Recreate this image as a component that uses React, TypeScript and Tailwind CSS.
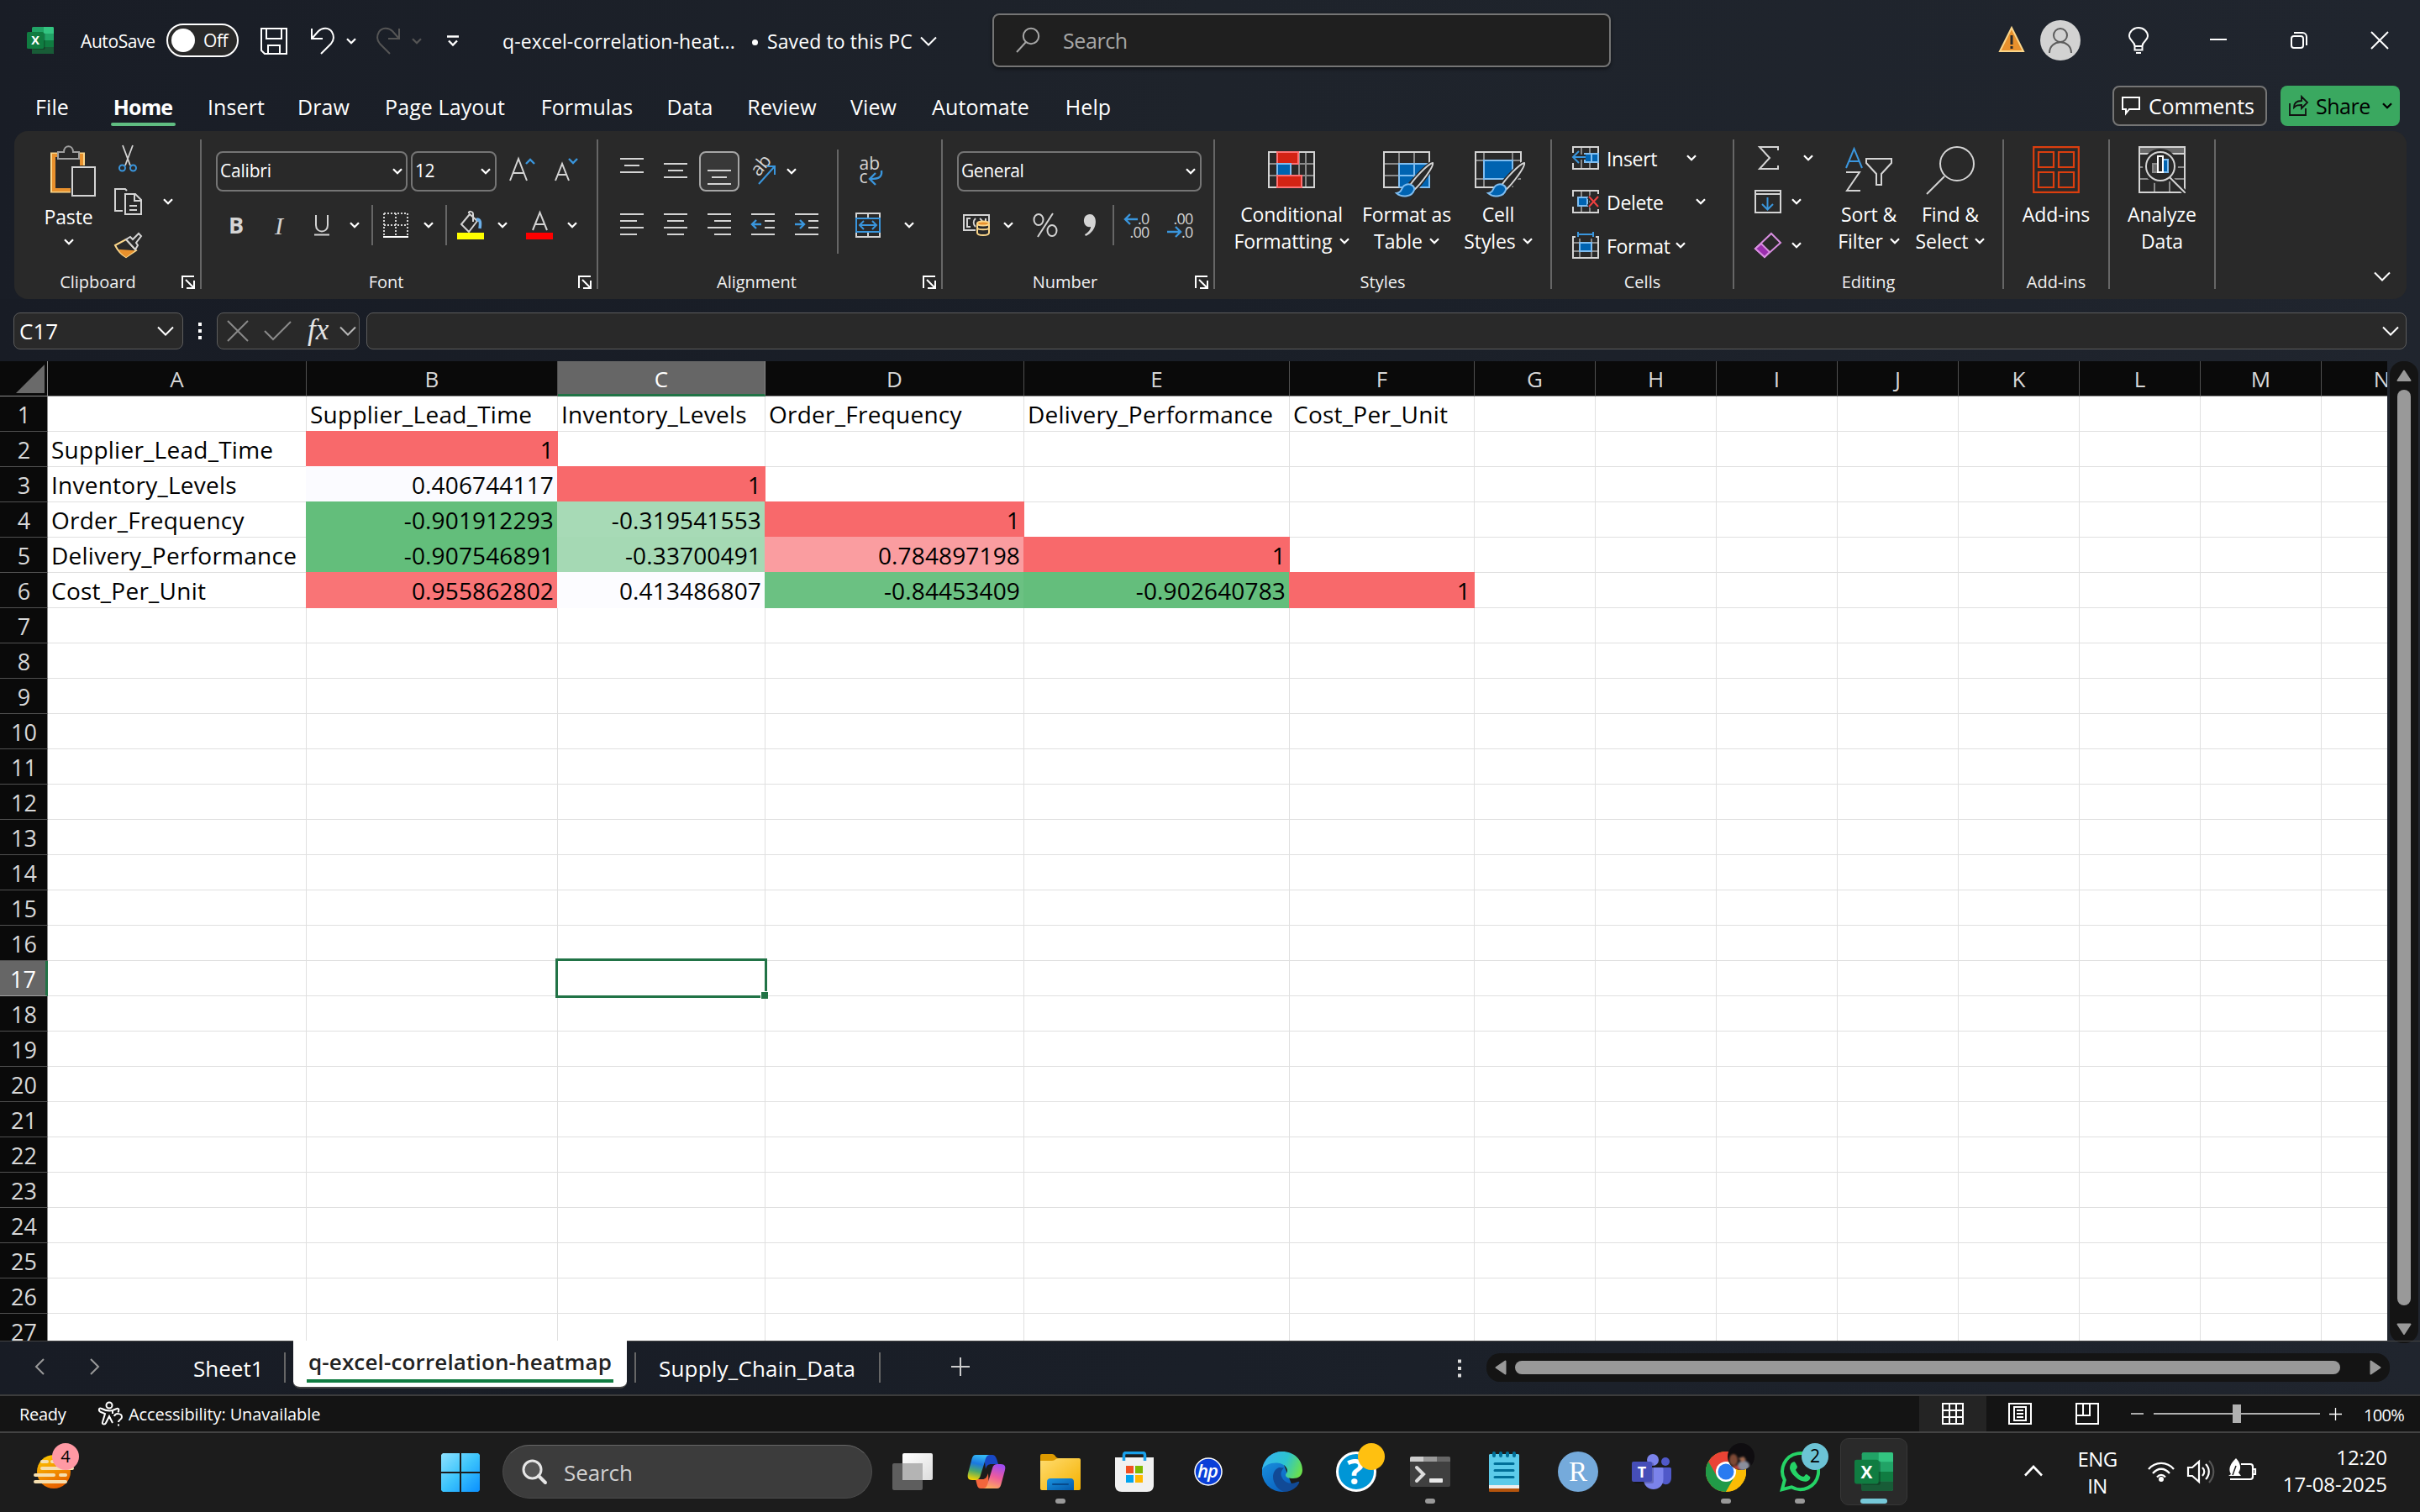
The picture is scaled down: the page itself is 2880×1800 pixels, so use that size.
import type { ReactNode } from 'react';

type IconProps = { w: number; h: number; children: ReactNode; className?: string };

function Icon({ w, h, children, className = '' }: IconProps) {
  return (
    <svg
      width={w}
      height={h}
      viewBox={`0 0 ${w} ${h}`}
      fill="none"
      stroke="#d4d4d4"
      strokeWidth="2"
      className={`block shrink-0 overflow-visible ${className}`}
    >
      {children}
    </svg>
  );
}

function Chevron({ className = 'text-white' }: { className?: string }) {
  return (
    <Icon w={12} h={8} className={className}>
      <path d="M1 1.2l5 5 5-5" stroke="currentColor" strokeWidth="2.3" />
    </Icon>
  );
}

function BigChevron({ className = 'text-white' }: { className?: string }) {
  return (
    <Icon w={20} h={12} className={className}>
      <path d="M1 1.5l9 9 9-9" stroke="currentColor" strokeWidth="2" />
    </Icon>
  );
}

function Slot({ className, children }: { className: string; children: ReactNode }) {
  return <div className={`flex shrink-0 items-center justify-center ${className}`}>{children}</div>;
}

function Sep({ className }: { className: string }) {
  return <div className={`w-[2px] shrink-0 bg-[#666] ${className}`} />;
}

function ExcelLogo({ size }: { size: number }) {
  return (
    <svg width={size} height={size} viewBox="0 0 32 32" className="block shrink-0">
      <rect x="6" y="0" width="26" height="32" rx="1.5" fill="#21a366" />
      <path d="M20 0h10.500a1.500 1.500 0 0 1 1.500 1.500V8H20z" fill="#33c481" />
      <rect x="20" y="8" width="12" height="8" fill="#21a366" />
      <rect x="6" y="16" width="14" height="16" fill="#185c37" />
      <rect x="20" y="16" width="12" height="8" fill="#107c41" />
      <path d="M6 24h26v6.500a1.500 1.500 0 0 1-1.500 1.500h-23A1.500 1.500 0 0 1 6 30.500z" fill="#185c37" />
      <rect x="6" y="7" width="15.500" height="20" rx="1.500" fill="#000" opacity=".25" />
      <rect x="0" y="6" width="20" height="20" rx="1.600" fill="#107c41" />
      <text x="10" y="21.300" textAnchor="middle" fontFamily="Open Sans, sans-serif" fontSize="14.500" fontWeight="700" fill="#fff">X</text>
    </svg>
  );
}

/* ---------- title bar ---------- */

function TitleBar() {
  return (
    <div className="flex h-[104px] items-center text-[21px] tracking-[-0.4px] text-white">
      <div className="ml-[32px] -mt-[8px]"><ExcelLogo size={32} /></div>
      <span className="-mt-[5px] ml-[32px] w-[90px] whitespace-nowrap">AutoSave</span>
      <div className="-mt-[8px] ml-[12px] flex h-[40px] w-[86px] items-center rounded-full border-2 border-white bg-[#292929] pl-[4px]">
        <div className="size-[28px] rounded-full bg-white" />
        <span className="ml-[10px] mt-[2px]">Off</span>
      </div>
      <Icon w={32} h={32} className="-mt-[7px] ml-[26px]">
        <path d="M1 1h30v30H5l-4-4zM7 1v12h18V1M9 31V21h14v10" stroke="#fff" />
      </Icon>
      <Icon w={28} h={32} className="-mt-[7px] ml-[28px]">
        <path d="M1 1v12h13M1 13L9 4C14-1 22 0 25 5s3 9-1 14L12 31" stroke="#fff" />
      </Icon>
      <div className="-mt-[7px] ml-[14px]"><Chevron /></div>
      <Icon w={28} h={32} className="-mt-[7px] ml-[24px]">
        <path d="M27 1v12H14M27 13L19 4C14-1 6 0 3 5s-3 9 1 14l12 12" stroke="#555" />
      </Icon>
      <div className="-mt-[7px] ml-[14px]"><Chevron className="text-[#555]" /></div>
      <Icon w={14} h={14} className="-mt-[7px] ml-[30px]">
        <path d="M0 1.500h14M2 6.500l5 5 5-5" stroke="#fff" strokeWidth="2.300" />
      </Icon>
      <span className="-mt-[5px] ml-[52px] w-[276px] whitespace-nowrap text-[23px] tracking-[0.1px]">q-excel-correlation-heat...</span>
      <span className="-mt-[3px] ml-[21px] size-[7px] rounded-full bg-white" />
      <span className="-mt-[5px] ml-[11px] w-[173px] whitespace-nowrap text-[23px] tracking-[0.1px]">Saved to this PC</span>
      <div className="-mt-[7px] ml-[9px]"><BigChevron /></div>
      <div className="-mt-[8px] ml-[66px] flex h-[64px] w-[736px] items-center rounded-[8px] border-2 border-[#757575] bg-[#1f1f1f] shadow-[0_2px_4px_rgba(0,0,0,.5)]">
        <Icon w={28} h={30} className="ml-[26px]">
          <circle cx="18" cy="10" r="9.200" stroke="#a6a6a6" />
          <path d="M12 17L1 29" stroke="#a6a6a6" />
        </Icon>
        <span className="ml-[28px] mt-[2px] text-[25px] text-[#a6a6a6]">Search</span>
      </div>
      <div className="ml-auto flex items-center pr-[38px]">
        <Icon w={30} h={30} className="-mt-[10px]">
          <path d="M15 1L29 29H1z" fill="#e8912d" stroke="#fbd68a" />
          <path d="M15 10v11M15 23v3" stroke="#292929" strokeWidth="3" />
        </Icon>
        <div className="-mt-[8px] ml-[19px] flex size-[48px] items-center justify-center rounded-full bg-[#d2d2d2]">
          <Icon w={28} h={30}>
            <circle cx="14" cy="9" r="8" stroke="#5c5c5c" />
            <path d="M1 30c0-17 26-17 26 0" stroke="#5c5c5c" />
          </Icon>
        </div>
        <Icon w={24} h={32} className="-mt-[8px] ml-[57px]">
          <path d="M7.500 23c0-6-6.500-6.500-6.500-12a11 10 0 0 1 22 0c0 5.500-6.500 6-6.500 12zM7.500 23v4.500h9V23M9 31h6" stroke="#fff" />
        </Icon>
        <Icon w={20} h={2} className="-mt-[10px] ml-[73px]"><path d="M0 1h20" stroke="#fff" /></Icon>
        <Icon w={20} h={20} className="-mt-[8px] ml-[76px]">
          <rect x="1" y="5" width="14" height="14" rx="3" stroke="#fff" />
          <path d="M4 1h10a5 5 0 0 1 5 5v10" stroke="#fff" />
        </Icon>
        <Icon w={20} h={20} className="-mt-[8px] ml-[76px]"><path d="M0 0l20 20M20 0L0 20" stroke="#fff" /></Icon>
      </div>
    </div>
  );
}

/* ---------- ribbon tabs ---------- */

const ribbonTabs = [
  { label: 'File', cls: 'w-[100px]' },
  { label: 'Home', cls: 'w-[116px]', active: true },
  { label: 'Insert', cls: 'w-[106px]' },
  { label: 'Draw', cls: 'w-[102px]' },
  { label: 'Page Layout', cls: 'w-[187px]' },
  { label: 'Formulas', cls: 'w-[151px]' },
  { label: 'Data', cls: 'w-[94px]' },
  { label: 'Review', cls: 'w-[125px]' },
  { label: 'View', cls: 'w-[93px]' },
  { label: 'Automate', cls: 'w-[162px]' },
  { label: 'Help', cls: 'w-[94px]' },
];

function TabBar() {
  return (
    <div className="flex h-[52px] pl-[12px] text-[25px] tracking-[0.1px] text-white">
      {ribbonTabs.map((t) => (
        <div key={t.label} className={`flex h-[46px] flex-col items-center whitespace-nowrap ${t.cls}`}>
          <span className={`leading-[47px] ${t.active ? 'font-bold tracking-[-0.9px]' : ''}`}>{t.label}</span>
          {t.active && <div className="-mt-[5px] h-[4px] w-[77px] shrink-0 rounded-full bg-[#60bd82]" />}
        </div>
      ))}
      <div className="-mt-[2px] ml-auto flex pr-[24px]">
        <div className="flex h-[48px] w-[184px] items-center rounded-[8px] border-2 border-[#757575] bg-[#292929] pl-[9px]">
          <Icon w={22} h={22}><path d="M1 1h20v14H9l-4 5v-5H1z" stroke="#fff" /></Icon>
          <span className="ml-[10px] mt-[2px] text-[25px] tracking-[-0.2px]">Comments</span>
        </div>
        <div className="ml-[16px] flex h-[48px] w-[142px] items-center rounded-[8px] bg-[#3aa860] pl-[10px] text-black">
          <Icon w={23} h={24}>
            <path d="M1 9v14h19v-8M6 14c0-6 4-8 9-8V1l7 7-7 7v-4c-4 0-6 0-9 3z" stroke="#111" strokeWidth="1.800" />
          </Icon>
          <span className="ml-[9px] mt-[2px] text-[25px] tracking-[-0.5px]">Share</span>
          <div className="ml-auto pr-[9px]"><Chevron className="text-black" /></div>
        </div>
      </div>
    </div>
  );
}

/* ---------- ribbon ---------- */

type GroupProps = { label?: string; launcher?: boolean; className: string; children: ReactNode; labelCls?: string };

function Group({ label, launcher, className, children, labelCls = '' }: GroupProps) {
  return (
    <div className={`flex shrink-0 ${className}`}>
      <div className="flex min-w-0 flex-1 flex-col">
        <div className="flex h-[162px]">{children}</div>
        <div className="flex h-[34px] items-center">
          <span className={`flex-1 pt-px text-center text-[20px] text-[#f0f0f0] ${labelCls}`}>{label}</span>
          {launcher && (
            <Icon w={16} h={16} className="mr-[6px] mt-[2px]">
              <path d="M1 15V1h14M5 5l10 10M15 6v9H6" stroke="#fff" />
            </Icon>
          )}
        </div>
      </div>
      <Sep className="mt-[10px] h-[178px]" />
    </div>
  );
}

function BigButton({ icon, line1, line2, chevron, className }: { icon: ReactNode; line1: string; line2?: string; chevron?: boolean; className: string }) {
  return (
    <div className={`flex shrink-0 flex-col items-center pt-[16px] ${className}`}>
      <div className="h-[64px]">{icon}</div>
      <div className="mt-[3px] flex flex-col items-center whitespace-nowrap text-[23px] leading-[32px] tracking-[-0.1px] text-white">
        <span>{line1}</span>
        {line2 && (
          <span className="flex items-center gap-[8px]">
            {line2}
            {chevron && <Chevron />}
          </span>
        )}
      </div>
    </div>
  );
}

function Lines({ d }: { d: string }) {
  return <Icon w={28} h={28}><path d={d} /></Icon>;
}

function ClipboardGroup() {
  return (
    <Group label="Clipboard" launcher className="w-[223px]">
      <div className="ml-[26px] flex w-[77px] flex-col items-center pt-[16px]">
        <Icon w={54} h={64} className="ml-[10px]">
          <path d="M10 10.500H1v46h23M34 10.500h6V25" stroke="#fbd68a" />
          <path d="M9 13H4v41h20" stroke="#e8912d" strokeWidth="4" />
          <path d="M33 13h4V25" stroke="#e8912d" strokeWidth="4" />
          <path d="M9 17V9h7c0-9 11-9 11 0h7v8z" stroke="#a0a0a0" fill="#292929" />
          <rect x="26" y="27" width="27" height="34" fill="#292929" />
        </Icon>
        <span className="mt-[4px] text-[23px] leading-[36px] tracking-[-0.1px] text-white">Paste</span>
        <div className="mt-[8px]"><Chevron /></div>
      </div>
      <div className="ml-[16px] flex flex-col pt-[6px]">
        <div className="flex h-[52px] items-center pl-[5px]">
          <Icon w={22} h={32}>
            <path d="M5 1l9 24M17 1L8 25" strokeWidth="1.800" />
            <circle cx="4.500" cy="28" r="3.500" stroke="#3a96dd" />
            <circle cx="17.500" cy="28" r="3.500" stroke="#3a96dd" />
          </Icon>
        </div>
        <div className="flex h-[52px] items-center">
          <Icon w={33} h={32}>
            <path d="M10 27H1V1h12l2 2M13 7h12l7 7v17H13zM24 7v8h8M18 21h9M18 26h9" />
          </Icon>
          <div className="ml-[25px]"><Chevron /></div>
        </div>
        <div className="flex h-[52px] items-center">
          <Icon w={33} h={30}>
            <path d="M14 8l12 13-12 8C8 26 4 21 1 15z" stroke="#fbd68a" />
            <path d="M7 21l15 1-8 6c-3-2-6-4-7-7z" fill="#e8912d" stroke="#e8912d" />
            <path d="M14 8l5-3 3 3 7-7 3 3-6 8 2 3-3 5z" fill="#292929" />
          </Icon>
        </div>
      </div>
    </Group>
  );
}

function FontGroup() {
  return (
    <Group label="Font" launcher className="w-[472px]" labelCls="pr-[9px]">
      <div className="flex flex-col gap-[16px] pl-[17px] pt-[24px]">
        <div className="flex h-[48px] items-center">
          <div className="flex h-[48px] w-[228px] items-center justify-between rounded-[8px] border-2 border-[#757575] pl-[3px] pr-[4px] text-[21px] tracking-[-0.2px] text-white">
            Calibri<Chevron />
          </div>
          <div className="ml-[4px] flex h-[48px] w-[102px] items-center justify-between rounded-[8px] border-2 border-[#757575] pl-[3px] pr-[5px] text-[21px] tracking-[-0.5px] text-white">
            12<Chevron />
          </div>
          <Icon w={30} h={30} className="-mt-[6px] ml-[15px]">
            <path d="M1 29L11 3l10 26M5 20h12" />
            <path d="M20 9l5-5 5 5" stroke="#3a96dd" strokeWidth="2.400" />
          </Icon>
          <Icon w={28} h={30} className="-mt-[6px] ml-[24px]">
            <path d="M1 29L9 9l8 20M4 22h10" />
            <path d="M17 3l5 5 5-5" stroke="#3a96dd" strokeWidth="2.400" />
          </Icon>
        </div>
        <div className="flex h-[48px] items-center text-[#d4d4d4]">
          <Slot className="w-[48px] text-[27px] font-bold">B</Slot>
          <Slot className="w-[54px]">
            <span className="font-['Liberation_Serif',serif] text-[30px] italic">I</span>
          </Slot>
          <Slot className="w-[48px]">
            <Icon w={18} h={26}><path d="M2 1v12c0 10 14 10 14 0V1M0 24.500h18" /></Icon>
          </Slot>
          <Slot className="w-[30px]"><Chevron /></Slot>
          <Sep className="ml-[5px] h-[48px]" />
          <Slot className="w-[53px]">
            <Icon w={30} h={30}>
              <path d="M1 1h28M1 15h28M1 1v26M15 1v26M29 1v26" strokeDasharray="2 2" />
              <path d="M0 29h30" stroke="#fff" />
            </Icon>
          </Slot>
          <Slot className="w-[26px]"><Chevron /></Slot>
          <Sep className="ml-[7px] h-[48px]" />
          <Slot className="w-[56px]">
            <Icon w={32} h={34}>
              <path d="M14 3c-1-3 5-3 5 1v9M15 4L5 16l9 9 10-13z" />
              <path d="M23 10c5 0 5 4 4 11" stroke="#6cb0ea" strokeWidth="3.500" />
              <rect x="0" y="26" width="32" height="8" fill="#ff0" stroke="none" />
            </Icon>
          </Slot>
          <Slot className="w-[20px]"><Chevron /></Slot>
          <Slot className="w-[68px]">
            <Icon w={32} h={34}>
              <path d="M8 23L16.500 2 25 23M11 16h11" />
              <rect x="0" y="26" width="32" height="8" fill="#f00" stroke="none" />
            </Icon>
          </Slot>
          <Slot className="w-[10px]"><Chevron /></Slot>
        </div>
      </div>
    </Group>
  );
}

function AlignmentGroup() {
  return (
    <Group label="Alignment" launcher className="w-[410px]" labelCls="pr-[9px]">
      <div className="flex w-[270px] flex-col gap-[16px] pl-[14px] pt-[24px]">
        <div className="flex h-[48px] items-center">
          <Slot className="w-[52px]"><Lines d="M0 -1h28M5 7h18M0 15h28" /></Slot>
          <Slot className="w-[52px]"><Lines d="M0 5h28M5 13h18M0 21h28" /></Slot>
          <Slot className="h-[48px] w-[52px]">
            <div className="flex size-[48px] items-center justify-center rounded-[8px] border-2 border-[#a6a6a6] bg-[#383838]">
              <Lines d="M0 13h28M5 21h18M0 29h28" />
            </div>
          </Slot>
          <Slot className="w-[52px]">
            <Icon w={32} h={32} className="-ml-[3px]">
              <text transform="translate(12 23) rotate(-50)" fontFamily="Open Sans, sans-serif" fontSize="22" letterSpacing="-.5" fill="#d4d4d4" stroke="none">ab</text>
              <path d="M12 31L31 10M22 10h9v10" stroke="#3a96dd" />
            </Icon>
          </Slot>
          <Slot className="w-[16px]"><Chevron /></Slot>
        </div>
        <div className="flex h-[48px] items-center">
          <Slot className="w-[52px]"><Lines d="M0 1h28M0 9h20M0 17h28M0 25h20" /></Slot>
          <Slot className="w-[52px]"><Lines d="M0 1h28M4 9h20M0 17h28M4 25h20" /></Slot>
          <Slot className="w-[52px]"><Lines d="M0 1h28M8 9h20M0 17h28M8 25h20" /></Slot>
          <Slot className="w-[52px]">
            <Icon w={28} h={28}>
              <path d="M0 1h28M16 9h12M16 17h12M0 25h28" />
              <path d="M12 13H1M6 8l-5 5 5 5" stroke="#3a96dd" strokeWidth="2.400" />
            </Icon>
          </Slot>
          <Slot className="w-[52px]">
            <Icon w={28} h={28}>
              <path d="M0 1h28M16 9h12M16 17h12M0 25h28" />
              <path d="M0 13h11M6 8l5 5-5 5" stroke="#3a96dd" strokeWidth="2.400" />
            </Icon>
          </Slot>
        </div>
      </div>
      <Sep className="ml-[14px] mt-[22px] h-[124px]" />
      <div className="flex flex-col gap-[16px] pt-[24px]">
        <div className="flex h-[48px] items-center">
          <Slot className="w-[76px]">
            <div className="relative h-[32px] w-[27px] text-[21px] text-[#d4d4d4]">
              <div className="-mt-[2px] flex flex-col leading-[16px]">
                <span>ab</span>
                <span>c</span>
              </div>
              <Icon w={16} h={18} className="absolute left-[11px] top-[14px]">
                <path d="M15 1c1 8-3 10-13 10M8 4l-7 7 7 7" stroke="#3a96dd" strokeWidth="2.400" />
              </Icon>
            </div>
          </Slot>
        </div>
        <div className="flex h-[48px] items-center">
          <Slot className="w-[70px]">
            <Icon w={30} h={30}>
              <path d="M1 1h28v28H1zM15 1v28" />
              <rect x="1" y="7" width="28" height="16" fill="#292929" stroke="#3a96dd" />
              <path d="M5 15h20M10 10l-5 5 5 5M20 10l5 5-5 5" stroke="#3a96dd" />
            </Icon>
          </Slot>
          <Slot className="w-[28px]"><Chevron /></Slot>
        </div>
      </div>
    </Group>
  );
}

function NumberGroup() {
  return (
    <Group label="Number" launcher className="w-[324px]" labelCls="pr-[9px]">
      <div className="flex flex-col gap-[16px] pl-[17px] pt-[24px]">
        <div className="flex h-[48px] w-[291px] items-center justify-between rounded-[8px] border-2 border-[#757575] pl-[3px] pr-[5px] text-[21px] tracking-[-0.4px] text-white">
          General<Chevron />
        </div>
        <div className="flex h-[48px] items-center">
          <Slot className="w-[46px]">
            <Icon w={32} h={26}>
              <path d="M15 19H1V1h30v9M9 5H5v10h4M15 15c-3-3-3-7 0-10M20 5c3 2 3 4 3 5M27 5v4" />
              <path d="M17 11v11c0 4 14 4 14 0V11" stroke="#fbd68a" fill="#292929" />
              <ellipse cx="24" cy="11" rx="7" ry="2.600" stroke="#fbd68a" fill="#e8912d" />
              <path d="M17 16c0 3 14 3 14 0" stroke="#fbd68a" />
            </Icon>
          </Slot>
          <Slot className="w-[30px]"><Chevron /></Slot>
          <Slot className="w-[58px]">
            <Icon w={30} h={28}>
              <ellipse cx="7" cy="7.500" rx="5.500" ry="6.500" />
              <ellipse cx="23" cy="20.500" rx="5.500" ry="6.500" />
              <path d="M24 0L6 28" />
            </Icon>
          </Slot>
          <Slot className="w-[48px]">
            <Icon w={14} h={26}>
              <path d="M7 0c10 0 10 20-5 26l-1-2c4-2 7-6 7-9-10 2-11-15-1-15z" fill="#d4d4d4" stroke="none" />
            </Icon>
          </Slot>
          <Sep className="ml-[3px] h-[48px]" />
          <Slot className="w-[52px]">
            <div className="relative flex h-[32px] w-[31px] flex-col items-end text-[18px] leading-[16px] tracking-[-0.8px] text-[#d4d4d4]">
              <span>.0</span>
              <span>.00</span>
              <Icon w={18} h={14} className="absolute left-0 top-[2px]">
                <path d="M17 7H2M8 1L2 7l6 6" stroke="#3a96dd" strokeWidth="2.400" />
              </Icon>
            </div>
          </Slot>
          <Slot className="w-[52px]">
            <div className="relative flex h-[32px] w-[31px] flex-col items-end text-[18px] leading-[16px] tracking-[-0.8px] text-[#d4d4d4]">
              <span>.00</span>
              <span>.0</span>
              <Icon w={18} h={14} className="absolute left-0 top-[17px]">
                <path d="M0 7h16M10 1l6 6-6 6" stroke="#3a96dd" strokeWidth="2.400" />
              </Icon>
            </div>
          </Slot>
        </div>
      </div>
    </Group>
  );
}

function Brush() {
  return (
    <>
      <path d="M59 22c-6 1-30 28-32 32l6 5c7-6 28-33 26-37z" fill="#292929" stroke="#292929" strokeWidth="5" />
      <path d="M59 22c-6 1-24 21-27 27l5 5c7-6 24-28 22-32z" fill="#292929" />
      <path d="M16 58c7-1 5-6 9-9 6-4 13 0 12 5-2 8-14 10-21 4z" fill="#0063b1" stroke="#7fbdf0" />
    </>
  );
}

function StylesGroup() {
  return (
    <Group label="Styles" className="w-[401px]">
      <BigButton
        className="ml-[24px] w-[134px]"
        line1="Conditional"
        line2="Formatting"
        chevron
        icon={
          <Icon w={56} h={64}>
            <path d="M11 9v42M45 9v42M1 23h54M1 37h54M37 9v42" stroke="#8a8a8a" />
            <rect x="1" y="9" width="54" height="42" />
            <rect x="11" y="9" width="25" height="14" fill="#d42314" stroke="#ff7072" />
            <rect x="11" y="23" width="16" height="14" fill="#0063b1" stroke="#7fbdf0" />
            <rect x="11" y="37" width="29" height="14" fill="#d42314" stroke="#ff7072" />
          </Icon>
        }
      />
      <BigButton
        className="ml-[13px] w-[114px]"
        line1="Format as"
        line2="Table"
        chevron
        icon={
          <Icon w={56} h={64}>
            <rect x="19" y="23" width="36" height="28" fill="#0063b1" stroke="#7fbdf0" />
            <path d="M37 23v28M19 37h36" stroke="#7fbdf0" />
            <path d="M19 9v14M37 9v14M1 23h54M1 37h18M19 23v28" stroke="#8a8a8a" />
            <path d="M19 51H1V9h54v14" />
            <path d="M19 51V23h36" stroke="#7fbdf0" />
            <Brush />
          </Icon>
        }
      />
      <BigButton
        className="ml-[9px] w-[86px]"
        line1="Cell"
        line2="Styles"
        chevron
        icon={
          <Icon w={56} h={64}>
            <path d="M11 9v42M45 9v42M1 19h54M1 41h54" stroke="#8a8a8a" />
            <path d="M55 22V9H1v42h28" />
            <rect x="11" y="19" width="34" height="22" fill="#0063b1" stroke="#7fbdf0" />
            <Brush />
          </Icon>
        }
      />
    </Group>
  );
}

function CellsGroup() {
  const row = 'flex h-[52px] items-center text-[23px] tracking-[-0.3px] text-white';
  return (
    <Group label="Cells" className="w-[217px]">
      <div className="flex flex-col pl-[24px] pt-[6px]">
        <div className={row}>
          <Icon w={32} h={28}>
            <path d="M11 1v26M21 1v26" stroke="#8a8a8a" />
            <path d="M1 8V1h30v7M1 20v7h30v-7" />
            <rect x="15" y="9" width="16" height="10" fill="#0063b1" stroke="#7fbdf0" />
            <path d="M23 9v10" stroke="#7fbdf0" />
            <path d="M16 13H2M8 6l-6 7 6 7" stroke="#292929" strokeWidth="6" />
            <path d="M16 13H1M8 6l-7 7 7 7" stroke="#3a96dd" />
          </Icon>
          <span className="ml-[9px] mt-[3px] w-[95px]">Insert</span>
          <Chevron />
        </div>
        <div className={row}>
          <Icon w={32} h={28}>
            <path d="M11 1v26M21 1v26" stroke="#8a8a8a" />
            <path d="M1 8V1h30v4M1 20v7h30v-4" />
            <rect x="7" y="9" width="11" height="10" fill="#0063b1" stroke="#7fbdf0" />
            <path d="M20 8l11 12M31 8L20 20" stroke="#292929" strokeWidth="6" />
            <path d="M20 8l11 12M31 8L20 20" stroke="#f04040" />
          </Icon>
          <span className="ml-[9px] mt-[3px] w-[106px]">Delete</span>
          <Chevron />
        </div>
        <div className={row}>
          <Icon w={32} h={32}>
            <path d="M9 8v22M23 8v22M1 13h30M1 23h30" stroke="#8a8a8a" />
            <path d="M4 6H1v25h30V6h-3" />
            <rect x="9" y="13" width="14" height="10" fill="#0063b1" stroke="#7fbdf0" />
            <path d="M7 3h18M7 0v6M25 0v6" stroke="#3a96dd" />
          </Icon>
          <span className="ml-[9px] mt-[3px] w-[82px]">Format</span>
          <Chevron />
        </div>
      </div>
    </Group>
  );
}

function EditingGroup() {
  return (
    <Group label="Editing" className="w-[321px]">
      <div className="flex w-[120px] flex-col pl-[24px] pt-[6px]">
        <div className="flex h-[52px] items-center">
          <Icon w={32} h={28}><path d="M28 5V1H6l12 13L6 27h22v-4" /></Icon>
          <div className="ml-[26px]"><Chevron /></div>
        </div>
        <div className="flex h-[52px] items-center">
          <Icon w={32} h={28}>
            <path d="M1 1h30v26H1zM1 5h30" />
            <path d="M15.500 9v14M9 17l6.500 6.500L22 17" stroke="#3a96dd" />
          </Icon>
          <div className="ml-[12px]"><Chevron /></div>
        </div>
        <div className="flex h-[52px] items-center">
          <Icon w={32} h={30}>
            <path d="M20 1l11 11-19 17L1 19z" stroke="#d88ee0" />
            <path d="M8 13L1 19l11 10 6-6z" fill="#9b2fae" stroke="#d88ee0" />
          </Icon>
          <div className="ml-[12px]"><Chevron /></div>
        </div>
      </div>
      <BigButton
        className="w-[80px]"
        line1="Sort &amp;"
        line2="Filter"
        chevron
        icon={
          <Icon w={56} h={64}>
            <path d="M1 28L10.500 5 20 28M4 20h13" stroke="#3a96dd" />
            <path d="M1 33h16L2 55h16" />
            <path d="M25 17h30v5L43 35v13h-6V35L25 22z" />
          </Icon>
        }
      />
      <BigButton
        className="ml-[12px] w-[90px]"
        line1="Find &amp;"
        line2="Select"
        chevron
        icon={
          <Icon w={58} h={64}>
            <circle cx="37" cy="23" r="20" />
            <path d="M22 38L1 59" />
          </Icon>
        }
      />
    </Group>
  );
}

function Ribbon() {
  return (
    <div className="ml-[17px] mr-[16px] flex h-[200px] overflow-hidden rounded-[16px] bg-[#292929]">
      <ClipboardGroup />
      <FontGroup />
      <AlignmentGroup />
      <NumberGroup />
      <StylesGroup />
      <CellsGroup />
      <EditingGroup />
      <Group label="Add-ins" className="w-[126px]">
        <BigButton
          className="w-[124px]"
          line1="Add-ins"
          icon={
            <Icon w={56} h={64}>
              <path d="M1.200 3.200h53.600v53.600H1.200zM7 9h18v18H7zM31 9h18v18H31zM7 33h18v18H7zM31 33h18v18H31z" stroke="#dc3e0e" strokeWidth="2.200" />
            </Icon>
          }
        />
      </Group>
      <Group className="w-[126px]">
        <BigButton
          className="w-[124px]"
          line1="Analyze"
          line2="Data"
          icon={
            <Icon w={56} h={64}>
              <rect x="2" y="4" width="52" height="6" fill="#6a6a6a" stroke="none" />
              <path d="M1 11h54M1 27h54M1 41h54M19 41v16M37 41v16" stroke="#8a8a8a" />
              <path d="M1 3h54v54H1zM1 11h54" />
              <circle cx="26" cy="26" r="21" fill="#292929" stroke="none" />
              <path d="M37 39l18 18" stroke="#292929" strokeWidth="6" />
              <path d="M37 39l18 18" />
              <circle cx="26" cy="26" r="17" />
              <rect x="17" y="23" width="6" height="10" fill="#6a6a6a" stroke="#8a8a8a" />
              <rect x="29" y="18" width="6" height="15" fill="#0063b1" stroke="#7fbdf0" />
              <rect x="23" y="14" width="6" height="19" fill="#292929" stroke="#fff" />
            </Icon>
          }
        />
      </Group>
      <div className="ml-auto flex items-end pb-[21px] pr-[19px]"><BigChevron /></div>
    </div>
  );
}

/* ---------- formula bar ---------- */

function FormulaBar() {
  const box = 'flex h-[44px] items-center rounded-[8px] border border-[#5c5c5c] bg-[#292929]';
  return (
    <div className="flex h-[74px] items-start pl-[16px] pt-[16px]">
      <div className={`w-[202px] justify-between pl-[6px] pr-[10px] text-[26px] text-white ${box}`}>
        C17<BigChevron />
      </div>
      <Icon w={4} h={20} className="ml-[18px] mt-[12px]">
        <path d="M0 2h4M0 10h4M0 18h4" stroke="#fff" strokeWidth="4" />
      </Icon>
      <div className={`ml-[18px] w-[170px] pl-[12px] ${box}`}>
        <Icon w={24} h={24}><path d="M0 0l24 24M24 0L0 24" stroke="#8a8a8a" /></Icon>
        <Icon w={32} h={22} className="ml-[20px]"><path d="M0 11l10 10L31 0" stroke="#8a8a8a" /></Icon>
        <span className="-mt-[4px] ml-[19px] w-[30px] font-['Liberation_Serif',serif] text-[35px] italic leading-none text-[#e4e4e4]">fx</span>
        <div className="ml-[8px]"><BigChevron className="text-[#b8b8b8]" /></div>
      </div>
      <div className={`ml-[8px] w-[2428px] justify-end pr-[8px] ${box}`}><BigChevron /></div>
    </div>
  );
}

/* ---------- sheet ---------- */

const columns = [
  { name: 'A', cls: 'w-[308px]' },
  { name: 'B', cls: 'w-[299px]' },
  { name: 'C', cls: 'w-[247px]' },
  { name: 'D', cls: 'w-[308px]' },
  { name: 'E', cls: 'w-[316px]' },
  { name: 'F', cls: 'w-[220px]' },
  ...['G', 'H', 'I', 'J', 'K', 'L', 'M', 'N'].map((name) => ({ name, cls: 'w-[144px]' })),
];

type Cell = { v: string; fill?: string };

const names = ['Supplier_Lead_Time', 'Inventory_Levels', 'Order_Frequency', 'Delivery_Performance', 'Cost_Per_Unit'];

const sheet: Record<string, Cell> = {
  B2: { v: '1', fill: 'bg-[#f8696b]' },
  B3: { v: '0.406744117', fill: 'bg-[#fbfbff]' },
  C3: { v: '1', fill: 'bg-[#f8696b]' },
  B4: { v: '-0.901912293', fill: 'bg-[#63be7b]' },
  C4: { v: '-0.319541553', fill: 'bg-[#a7dab6]' },
  D4: { v: '1', fill: 'bg-[#f8696b]' },
  B5: { v: '-0.907546891', fill: 'bg-[#63be7b]' },
  C5: { v: '-0.33700491', fill: 'bg-[#a5d9b4]' },
  D5: { v: '0.784897198', fill: 'bg-[#fa9da0]' },
  E5: { v: '1', fill: 'bg-[#f8696b]' },
  B6: { v: '0.955862802', fill: 'bg-[#f97476]' },
  C6: { v: '0.413486807', fill: 'bg-[#fcfcff]' },
  D6: { v: '-0.84453409', fill: 'bg-[#6bc182]' },
  E6: { v: '-0.902640783', fill: 'bg-[#64be7c]' },
  F6: { v: '1', fill: 'bg-[#f8696b]' },
};

names.forEach((n, i) => {
  sheet[`A${i + 2}`] = { v: n };
  sheet[`${'BCDEF'[i]}1`] = { v: n };
});

const rows = Array.from({ length: 27 }, (_, i) => i + 1);

function Sheet() {
  return (
    <div className="flex h-[1166px]">
      <div className="flex w-[2841px] flex-col overflow-hidden bg-white">
        <div className="flex h-[42px] w-[3000px] shrink-0 text-[26px] leading-[43px] text-[#d8d8d8]">
          <div className="flex w-[57px] shrink-0 items-end justify-end border-b border-r border-[#8a8a8a] bg-[#0a0a0a] pb-[3px] pr-[3px]">
            <Icon w={34} h={34}><path d="M34 0v34H0z" fill="#6a6a6a" stroke="none" /></Icon>
          </div>
          {columns.map((c) =>
            c.name === 'C' ? (
              <div key={c.name} className={`shrink-0 border-b-[3px] border-r border-b-[#217346] border-r-[#8a8a8a] bg-[#666] text-center text-white ${c.cls}`}>C</div>
            ) : (
              <div key={c.name} className={`shrink-0 border-b border-r border-b-[#8a8a8a] border-r-[#505050] bg-[#0a0a0a] text-center ${c.cls}`}>{c.name}</div>
            ),
          )}
        </div>
        {rows.map((r) => (
          <div key={r} className="flex h-[42px] w-[3000px] shrink-0 text-[28px] leading-[43px] text-black">
            {r === 17 ? (
              <div className="w-[57px] shrink-0 border-b border-r-[3px] border-b-[#a0a0a0] border-r-[#217346] bg-[#666] pl-px text-center text-[27px] text-white">17</div>
            ) : (
              <div className="w-[57px] shrink-0 border-b border-r border-b-[#505050] border-r-[#8a8a8a] bg-[#0a0a0a] pl-px text-center text-[27px] text-[#d8d8d8]">{r}</div>
            )}
            {columns.map((c) => {
              const key = `${c.name}${r}`;
              const cell = sheet[key];
              return (
                <div key={key} className={`relative shrink-0 whitespace-nowrap border-b border-r border-[#e0e0e0] ${c.cls}`}>
                  {cell?.fill && <div className={`absolute -inset-px ${cell.fill}`} />}
                  {cell && (
                    <div className={`relative ${cell.fill ? 'pr-[4px] text-right tracking-[0.15px]' : 'pl-[4px] tracking-[0.25px]'}`}>{cell.v}</div>
                  )}
                  {key === 'C17' && (
                    <div className="absolute -inset-[3px] z-10 border-[3px] border-[#217346]">
                      <div className="absolute -bottom-[4px] -right-[4px] size-[9px] border-l border-t border-white bg-[#217346]" />
                    </div>
                  )}
                </div>
              );
            })}
          </div>
        ))}
      </div>
      <div className="ml-[3px] flex h-[1169px] w-[34px] flex-col items-center rounded-[16px] bg-[#141414] pt-[10px]">
        <Icon w={18} h={14}><path d="M9 1.500L16.500 13h-15z" fill="#999" stroke="#999" strokeLinejoin="round" /></Icon>
        <div className="mt-[10px] h-[1090px] w-[16px] rounded-full bg-[#999]" />
        <Icon w={18} h={14} className="mt-[21px]"><path d="M9 13L16.500 1.500h-15z" fill="#999" stroke="#999" strokeLinejoin="round" /></Icon>
      </div>
    </div>
  );
}

/* ---------- sheet tabs and status bar ---------- */

function SheetTabs() {
  return (
    <div className="flex h-[64px] w-[2880px] text-[26px] text-white">
      <div className="flex h-[64px] w-[349px] items-center border-t border-[#444]">
        <Icon w={11} h={20} className="-mt-[4px] ml-[42px]"><path d="M10 1L1 10l9 9" stroke="#999" /></Icon>
        <Icon w={11} h={20} className="-mt-[4px] ml-[54px]"><path d="M1 1l9 9-9 9" stroke="#999" /></Icon>
        <span className="ml-[112px] mt-[2px] w-[108px]">Sheet1</span>
        <Sep className="-mt-[2px] h-[36px]" />
      </div>
      <div className="flex h-[57px] w-[397px] flex-col items-center rounded-b-[8px] border-b-2 border-[#444] bg-white text-[#222]">
        <span className="mt-[5px] whitespace-nowrap text-[26px] font-semibold leading-[41px] tracking-[0.15px]">q-excel-correlation-heatmap</span>
        <div className="h-[4px] w-[365px] shrink-0 bg-[#107c41]" />
      </div>
      <div className="flex h-[64px] flex-1 items-center border-t border-[#444]">
        <Sep className="-mt-[2px] ml-[9px] h-[36px]" />
        <span className="ml-[27px] mt-[2px] w-[262px] whitespace-nowrap tracking-[0.2px]">Supply_Chain_Data</span>
        <Sep className="-mt-[2px] h-[36px]" />
        <Icon w={22} h={22} className="-mt-[4px] ml-[84px]"><path d="M11 0v22M0 11h22" stroke="#ccc" /></Icon>
        <Icon w={4} h={22} className="ml-auto"><path d="M0 2.500h4M0 11h4M0 19.500h4" stroke="#ddd" strokeWidth="4" /></Icon>
        <div className="-mt-[2px] ml-[30px] mr-[36px] flex h-[34px] w-[1075px] items-center rounded-[16px] bg-[#141414]">
          <Icon w={14} h={18} className="ml-[10px]"><path d="M12.500 1.500v15L1.500 9z" fill="#999" stroke="#999" strokeLinejoin="round" /></Icon>
          <div className="ml-[10px] h-[16px] w-[982px] rounded-full bg-[#999]" />
          <Icon w={14} h={18} className="ml-[35px]"><path d="M1.500 1.500v15l11-7.500z" fill="#999" stroke="#999" strokeLinejoin="round" /></Icon>
        </div>
      </div>
    </div>
  );
}

function StatusBar() {
  return (
    <div className="flex h-[44px] items-center border-t-2 border-[#3c3c3c] bg-[#141414] text-[20px] text-white">
      <span className="ml-[23px] mt-[2px] w-[94px] tracking-[-0.3px]">Ready</span>
      <Icon w={29} h={28}>
        <circle cx="13" cy="4" r="3.500" stroke="#fff" />
        <path d="M22 8l-5 2v4M4 8c-4-2-4 3-1 4l5 2-3 10c-1 3 3 3 4 1l4-8 4 8M4 8c6 3 13 3 18 0 3-1 3 3 1 4" stroke="#fff" />
        <path d="M19 17c1-4 9-4 9 1 0 3-4 3-4 6M24 26.500v2" stroke="#fff" />
      </Icon>
      <span className="ml-[7px] mt-[2px] whitespace-nowrap tracking-[-0.1px]">Accessibility: Unavailable</span>
      <div className="ml-auto flex h-[42px] w-[80px] items-center justify-center bg-[#242424]">
        <Icon w={26} h={26}><path d="M1 1h24v24H1zM9 1v24M17 1v24M1 9h24M1 17h24" stroke="#fff" /></Icon>
      </div>
      <Slot className="w-[80px]">
        <Icon w={28} h={26}><path d="M1 1h26v24H1zM7 5h14v16H7zM10 9h8M10 13h8M10 17h8" stroke="#fff" /></Icon>
      </Slot>
      <Slot className="w-[80px]">
        <Icon w={28} h={26}><path d="M1 1h26v24H1zM1 15h16V1M9 1v14" stroke="#fff" /></Icon>
      </Slot>
      <Icon w={15} h={2} className="ml-[12px]"><path d="M0 1h15" stroke="#fff" strokeWidth="1.300" /></Icon>
      <div className="ml-[12px] flex h-[22px] w-[198px] items-center">
        <div className="h-[2px] w-[94px] bg-[#b0b0b0]" />
        <div className="h-[22px] w-[10px] bg-[#b0b0b0]" />
        <div className="h-[2px] w-[94px] bg-[#b0b0b0]" />
      </div>
      <Icon w={15} h={15} className="ml-[11px]"><path d="M7.500 0v15M0 7.500h15" stroke="#fff" strokeWidth="1.300" /></Icon>
      <span className="ml-[26px] mr-[9px] mt-[3px] w-[58px] tracking-[-0.7px]">100%</span>
    </div>
  );
}

/* ---------- taskbar ---------- */

function TaskSlot({ children, running, active, badge }: { children: ReactNode; running?: boolean; active?: boolean; badge?: ReactNode }) {
  return (
    <div className={`relative flex h-[80px] w-[80px] shrink-0 items-center justify-center rounded-[10px] ${active ? 'border border-[#373737] bg-[#2a2a2a]' : ''}`}>
      {children}
      {badge}
      {running && <div className="absolute bottom-[2px] left-[34px] h-[6px] w-[12px] rounded-full bg-[#999]" />}
      {active && <div className="absolute bottom-[1px] left-[23px] h-[6px] w-[32px] rounded-full bg-[#76c8d8]" />}
    </div>
  );
}

function Taskbar() {
  return (
    <div className="flex h-[96px] border-t-2 border-[#434343] bg-[#1c1c1c] pt-[6px] text-white">
      <div className="relative ml-[40px] mt-[20px] h-[40px] w-[54px]">
        <svg width="50" height="40" viewBox="0 0 50 40" className="block">
          <defs>
            <linearGradient id="sun" x1="0" y1="0" x2=".4" y2="1">
              <stop offset="0" stopColor="#ffd000" />
              <stop offset="1" stopColor="#e86400" />
            </linearGradient>
          </defs>
          <circle cx="24" cy="20" r="20" fill="url(#sun)" />
          <path d="M10 8h6M22 8h4M10 16h36M2 24h22M32 24h6M2 32h36" stroke="#f6dfb0" strokeWidth="4" strokeLinecap="round" />
        </svg>
        <div className="absolute -top-[14px] left-[22px] flex size-[32px] items-center justify-center rounded-full bg-[#ff99a4] text-[20px] text-black">4</div>
      </div>
      <svg width="46" height="46" viewBox="0 0 46 46" className="ml-[431px] mt-[18px] block shrink-0">
        <defs>
          <linearGradient id="win" x1="0" y1="0" x2="1" y2="1">
            <stop offset="0" stopColor="#8fe2ff" />
            <stop offset=".5" stopColor="#3cc4fc" />
            <stop offset="1" stopColor="#0a90ff" />
          </linearGradient>
        </defs>
        <path d="M2 0h20v22H0V2zM24 0h20l2 2v20H24zM0 24h22v22H2l-2-2zM24 24h22v20l-2 2H24z" fill="url(#win)" />
      </svg>
      <div className="ml-[27px] mt-[8px] flex h-[64px] w-[440px] shrink-0 items-center rounded-full border border-[#4c4c4c] border-t-[#666] bg-[#3c3c3c]">
        <Icon w={30} h={30} className="ml-[22px]">
          <circle cx="12.500" cy="12.500" r="10.500" stroke="#e6e6e6" strokeWidth="3" fill="#555" />
          <path d="M20 20l8 8" stroke="#e6e6e6" strokeWidth="4" strokeLinecap="round" />
        </Icon>
        <span className="ml-[20px] mt-[2px] text-[26px] tracking-[-0.1px] text-[#d0d0d0]">Search</span>
      </div>
      <div className="ml-[8px] flex gap-[8px]">
        <TaskSlot>
          <svg width="48" height="44" viewBox="0 0 48 44">
            <defs>
              <linearGradient id="tv" x1="0" y1="0" x2="1" y2="1">
                <stop offset="0" stopColor="#fff" />
                <stop offset="1" stopColor="#ddd" />
              </linearGradient>
            </defs>
            <rect x="12" y="0" width="36" height="32" rx="2" fill="url(#tv)" />
            <rect x="0" y="12" width="36" height="32" rx="2" fill="#5e5e5e" />
            <rect x="12" y="12" width="24" height="20" fill="#b4b4b4" />
          </svg>
        </TaskSlot>
        <TaskSlot>
          <svg width="46" height="42" viewBox="0 0 46 42">
            <defs>
              <linearGradient id="cp1" x1=".5" y1="0" x2=".3" y2="1">
                <stop offset="0" stopColor="#35b8f5" />
                <stop offset=".35" stopColor="#1b78e0" />
                <stop offset=".65" stopColor="#4aa86c" />
                <stop offset="1" stopColor="#f5d400" />
              </linearGradient>
              <linearGradient id="cp2" x1=".6" y1="0" x2=".3" y2="1">
                <stop offset="0" stopColor="#a04bf0" />
                <stop offset=".5" stopColor="#ee5c9c" />
                <stop offset="1" stopColor="#ffab5c" />
              </linearGradient>
            </defs>
            <path d="M20 1h10c4 0 5 4 7 11h-8c-4 0-6 2-7 6z" fill="#1848c4" />
            <path d="M26 41H16c-4 0-4-4-6-11h8c4 0 5-2 7-7z" fill="#f4663c" />
            <path d="M10 1h17c-4 0-5 4-6 8l-5 16c-1 4-3 6-7 6H6c-5 0-6-3-5-8l4-15c1-4 2-7 5-7z" fill="url(#cp1)" />
            <path d="M36 41H19c4 0 5-4 6-8l5-16c1-4 3-5 7-5h3c5 0 6 3 5 7l-4 15c-1 4-2 7-5 7z" fill="url(#cp2)" />
          </svg>
        </TaskSlot>
        <TaskSlot running>
          <svg width="48" height="43" viewBox="0 0 48 43">
            <defs>
              <linearGradient id="fold" x1="0" y1="0" x2="1" y2="1">
                <stop offset="0" stopColor="#ffdc70" />
                <stop offset="1" stopColor="#f5b100" />
              </linearGradient>
              <linearGradient id="foldb" x1="0" y1="0" x2="1" y2="1">
                <stop offset="0" stopColor="#1a94e0" />
                <stop offset="1" stopColor="#0458a8" />
              </linearGradient>
            </defs>
            <path d="M0 2a2 2 0 0 1 2-2h12c4 0 4 5 8 5h24v10H0z" fill="#dd9a00" />
            <path d="M0 8h14c4 0 4-3 8-3h24a2 2 0 0 1 2 2v34a2 2 0 0 1-2 2H2a2 2 0 0 1-2-2z" fill="url(#fold)" />
            <path d="M8 43V33c0-3 2-4 4-4h24c3 0 4 2 4 4v10z" fill="url(#foldb)" />
            <rect x="14" y="35" width="20" height="2" rx="1" fill="#064a8c" />
          </svg>
        </TaskSlot>
        <TaskSlot>
          <svg width="46" height="48" viewBox="0 0 46 48">
            <path d="M0 7h46v33c0 5-3 8-8 8H8c-5 0-8-3-8-8z" fill="#f1f1f1" />
            <path d="M10.500 11V4c0-1.500 1-2.500 2.500-2.500h20c1.500 0 2.500 1 2.500 2.500v7" fill="none" stroke="#18a0ea" strokeWidth="3.500" />
            <rect x="13" y="17" width="9" height="9" fill="#f25022" />
            <rect x="24" y="17" width="9" height="9" fill="#7fba00" />
            <rect x="13" y="28" width="9" height="9" fill="#00a4ef" />
            <rect x="24" y="28" width="9" height="9" fill="#ffb900" />
          </svg>
        </TaskSlot>
        <TaskSlot>
          <svg width="34" height="34" viewBox="0 0 34 34">
            <circle cx="17" cy="17" r="16" fill="#0a3fd8" stroke="#fff" strokeWidth="1.500" />
            <text x="16" y="23.500" textAnchor="middle" fontFamily="Open Sans, sans-serif" fontSize="22" fontStyle="italic" fontWeight="600" letterSpacing="-1" fill="#fff">hp</text>
          </svg>
        </TaskSlot>
        <TaskSlot>
          <svg width="48" height="48" viewBox="0 0 48 48">
            <defs>
              <linearGradient id="e1" x1="0" y1=".3" x2="1" y2=".6">
                <stop offset="0" stopColor="#36b4f0" />
                <stop offset=".55" stopColor="#2cc3d0" />
                <stop offset="1" stopColor="#6be04c" />
              </linearGradient>
              <linearGradient id="e2" x1="0" y1="0" x2=".6" y2="1">
                <stop offset="0" stopColor="#1b9be4" />
                <stop offset="1" stopColor="#0b62c0" />
              </linearGradient>
            </defs>
            <path d="M24 0a24 24 0 1 0 13 44L30 26l-4-10z" fill="url(#e2)" />
            <path d="M20 19c-5 2-7 7-7 11 0 8 6 16 13 17.500 8 1 15-4 18-10 1-2-1-2-3-1-6 3-14 1-17-5-3-5-1-9 2-12z" fill="#114a96" />
            <path d="M0 22C2 8 12 0 24 0c14 0 24 10 24 22 0 7-5 10-11 10-5 0-9-1-9-4 0-2 2-2 2-5 0-5-5-9-12-9.500C10 13 3 16 0 22z" fill="url(#e1)" />
          </svg>
        </TaskSlot>
        <TaskSlot badge={<div className="absolute left-[42px] top-[6px] size-[32px] rounded-full bg-[#ffc010]" />}>
          <svg width="48" height="48" viewBox="0 0 48 48" className="overflow-visible">
            <circle cx="24" cy="24" r="22.500" fill="#0096d6" stroke="#fff" strokeWidth="3" />
            <text x="23" y="38.500" textAnchor="middle" fontFamily="Open Sans, sans-serif" fontSize="42" fontWeight="700" fill="#fff">?</text>
          </svg>
        </TaskSlot>
        <TaskSlot running>
          <svg width="48" height="36" viewBox="0 0 48 36">
            <rect width="48" height="36" rx="2" fill="#404040" />
            <path d="M0 6V2a2 2 0 0 1 2-2h14v6z" fill="#ccc" />
            <path d="M16 0h16v6H16z" fill="#999" />
            <path d="M32 0h14a2 2 0 0 1 2 2v4H32z" fill="#666" />
            <path d="M8 13l8 8-8 8" fill="none" stroke="#ddd" strokeWidth="4" strokeLinecap="round" />
            <rect x="23" y="26" width="16" height="5" rx="1" fill="#e8e8e8" />
          </svg>
        </TaskSlot>
        <TaskSlot>
          <svg width="36" height="48" viewBox="0 0 36 48">
            <rect y="42" width="36" height="6" rx="1" fill="#b5540c" />
            <rect y="38" width="36" height="6" fill="#eee" />
            <path d="M1 3h34l1 1v36H0V4z" fill="#5ccbea" />
            <path d="M6 2v3M14 2v3M22 2v3M30 2v3" stroke="#006f98" strokeWidth="4" strokeLinecap="round" />
            <path d="M7 14.500h22M7 22.500h22M7 30.500h22" stroke="#006f98" strokeWidth="3" strokeLinecap="round" />
          </svg>
        </TaskSlot>
        <TaskSlot>
          <div className="flex size-[48px] items-center justify-center rounded-full bg-[#75aadb] font-['Liberation_Serif',serif] text-[33px] leading-none text-white">R</div>
        </TaskSlot>
        <TaskSlot>
          <svg width="48" height="42" viewBox="0 0 48 42">
            <circle cx="40" cy="9" r="5" fill="#5059c9" />
            <path d="M34 16h11.500a1.500 1.500 0 0 1 1.500 1.500V28c0 11-13 11-13 0z" fill="#5059c9" />
            <circle cx="25" cy="7" r="7" fill="#7b83eb" />
            <path d="M14 16h22a1.500 1.500 0 0 1 1.500 1.500V30c0 16-23.500 16-23.500 0z" fill="#7b83eb" />
            <rect x="3" y="10" width="23" height="25" rx="2" fill="#000" opacity=".2" />
            <rect y="9" width="24" height="24" rx="2" fill="#464eb8" />
            <text x="12" y="27.500" textAnchor="middle" fontFamily="Open Sans, sans-serif" fontSize="18" fontWeight="700" fill="#fff">T</text>
          </svg>
        </TaskSlot>
        <TaskSlot
          running
          badge={
            <svg width="32" height="32" viewBox="0 0 32 32" className="absolute left-[42px] top-[6px]">
              <defs>
                <clipPath id="face"><circle cx="16" cy="16" r="16" /></clipPath>
                <filter id="soft"><feGaussianBlur stdDeviation="1.300" /></filter>
              </defs>
              <g clipPath="url(#face)">
                <rect width="32" height="32" fill="#0f0d10" />
                <g filter="url(#soft)">
                  <ellipse cx="7" cy="20" rx="5" ry="7" fill="#7e4a34" />
                  <ellipse cx="19" cy="27" rx="7" ry="6" fill="#8a8f9c" />
                  <path d="M4 29l8-3 3 6H4z" fill="#b04038" />
                  <path d="M13 18l6-2 3 4-5 3z" fill="#a06a50" />
                </g>
              </g>
            </svg>
          }
        >
          <svg width="48" height="48" viewBox="0 0 48 48">
            <circle cx="24" cy="24" r="24" fill="#fbbc05" />
            <path d="M3.200 12A24 24 0 0 0 24 48L34.400 30 24 24z" fill="#219a48" />
            <path d="M24 12h20.800A24 24 0 0 1 24 48l10.400-18z" fill="#fbbc05" />
            <path d="M3.200 12A24 24 0 0 1 44.800 12H24L13.600 30z" fill="#ea4335" />
            <circle cx="24" cy="24" r="12" fill="#fff" />
            <circle cx="24" cy="24" r="9.500" fill="#2a7bf0" />
          </svg>
        </TaskSlot>
        <TaskSlot
          running
          badge={<div className="absolute left-[42px] top-[6px] flex size-[32px] items-center justify-center rounded-full bg-[#6cc3d5] text-[21px] text-black">2</div>}
        >
          <svg width="48" height="48" viewBox="0 0 48 48">
            <path d="M2.800 45.200l3-11.200A21.500 21.500 0 1 1 14 42.300z" fill="none" stroke="#25d366" strokeWidth="4" />
            <path d="M15 13c2-1 3-1 4 1l2 4c0 2-2 3-2 4 2 4 5 7 9 8 2 0 2-3 4-3l4 3c1 1 0 3-1 4-3 3-8 2-13-1-5-4-9-8-10-13 0-3 1-6 3-7z" fill="#25d366" />
          </svg>
        </TaskSlot>
        <TaskSlot active><ExcelLogo size={46} /></TaskSlot>
      </div>
      <div className="ml-auto flex pr-[39px] text-[24px] tracking-[-0.1px]">
        <Icon w={22} h={14} className="mt-[32px]"><path d="M1 12.500L11 2l10 10.500" stroke="#fff" strokeWidth="2.600" /></Icon>
        <div className="ml-[40px] mt-[9px] w-[50px] whitespace-nowrap text-center leading-[32px] tracking-[-0.6px]">ENG<br />IN</div>
        <Icon w={32} h={24} className="ml-[35px] mt-[28px]">
          <path d="M1 9c8-9.500 22-9.500 30 0M6 14c6-7 14-7 20 0M11 18.500c3-3.500 7-3.500 10 0" stroke="#fff" strokeWidth="2.300" />
          <circle cx="16" cy="21" r="3" fill="#fff" stroke="none" />
        </Icon>
        <Icon w={33} h={28} className="ml-[15px] mt-[26px]">
          <path d="M1 9h5l8-7v24l-8-7H1zM18 9c3 3 3 7 0 10M22 5c5 5 5 13 0 18" stroke="#fff" strokeWidth="2.200" />
          <path d="M26 1c7 8 7 18 0 26" stroke="#555" strokeWidth="2.200" />
        </Icon>
        <Icon w={33} h={28} className="ml-[16px] mt-[24px]">
          <path d="M15 7h11c2 0 3 1 3 3v12c0 2-1 3-3 3H2M29 13h3v6h-3" stroke="#fff" strokeWidth="2.200" />
          <path d="M9 0c5 5 7 12 3 17l3 4H0l3-2C-1 12 3 6 9 0z" fill="#fff" stroke="none" />
          <path d="M9 9L5 20" stroke="#1c1c1c" strokeWidth="1.500" />
        </Icon>
        <div className="ml-[26px] mt-[7px] w-[130px] whitespace-nowrap text-right leading-[32px]">12:20<br />17-08-2025</div>
      </div>
    </div>
  );
}

export default function App() {
  return (
    <div className="flex h-[1800px] w-[2880px] flex-col overflow-hidden bg-linear-to-r from-[#191d26] via-[#1e232b] to-[#20252e] font-['Open_Sans','Noto_Sans',sans-serif]">
      <TitleBar />
      <TabBar />
      <Ribbon />
      <div className="flex flex-col bg-linear-to-r from-[#181c25] via-[#1a1f28] to-[#20252e]">
        <FormulaBar />
        <Sheet />
        <SheetTabs />
      </div>
      <StatusBar />
      <Taskbar />
    </div>
  );
}
